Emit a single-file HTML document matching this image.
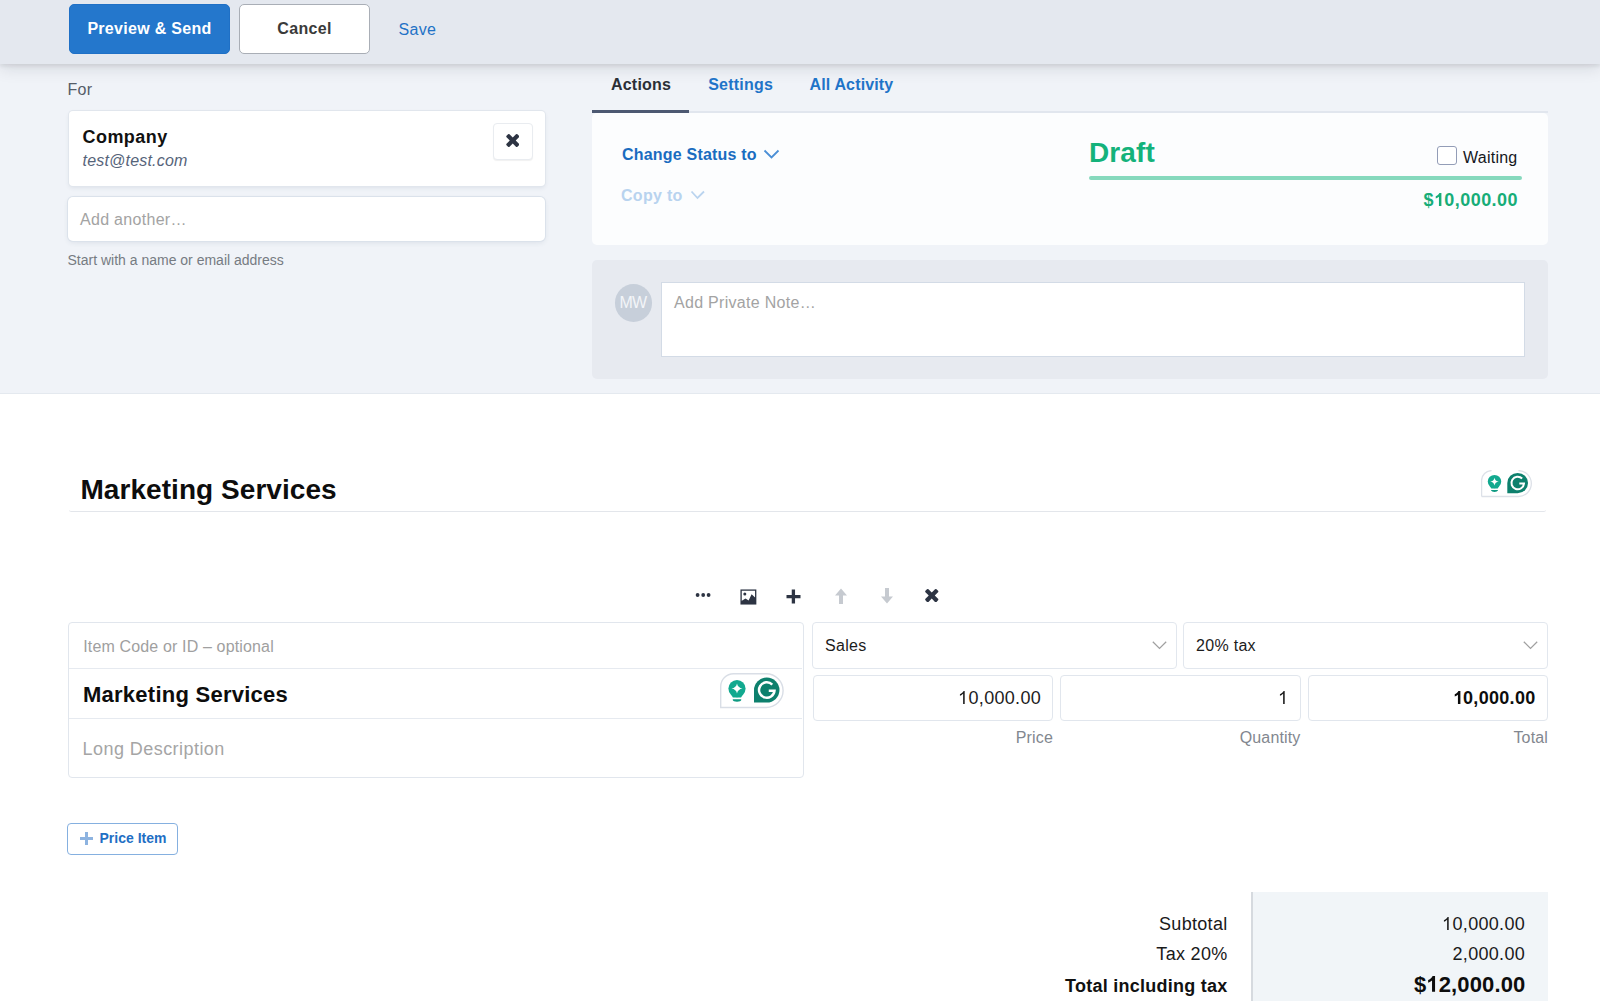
<!DOCTYPE html>
<html><head><meta charset="utf-8">
<style>
*{box-sizing:border-box;margin:0;padding:0}
html,body{width:1600px;height:1001px;overflow:hidden;background:#fff;font-family:"Liberation Sans",sans-serif;}
.a{position:absolute}
.t{position:absolute;white-space:pre;line-height:1;letter-spacing:.3px}
</style></head><body>

<!-- top light section -->
<div class="a" style="left:0;top:0;width:1600px;height:394px;background:#f0f3f8;border-bottom:1px solid #e4e9ef"></div>

<!-- header -->
<div class="a" style="left:0;top:0;width:1600px;height:64px;background:#e4e8ef;box-shadow:0 2px 4px rgba(20,25,35,.09),0 4px 16px rgba(20,25,35,.12)"></div>
<div class="a" style="left:69px;top:4px;width:161px;height:50px;background:#2477cc;border:1px solid #1f70c6;border-radius:5px"></div>
<div class="t" style="left:69px;top:21.3px;width:161px;text-align:center;font-size:16px;font-weight:bold;color:#fff">Preview &amp; Send</div>
<div class="a" style="left:239px;top:4px;width:131px;height:50px;background:#fff;border:1px solid #a9aeb6;border-radius:5px"></div>
<div class="t" style="left:239px;top:21.3px;width:131px;text-align:center;font-size:16px;font-weight:bold;color:#3a3a3a">Cancel</div>
<div class="t" style="left:398.5px;top:21.7px;font-size:16px;color:#1f72c6">Save</div>

<!-- For -->
<div class="t" style="left:67.5px;top:81.5px;font-size:16px;color:#555d68">For</div>
<div class="a" style="left:68.5px;top:111px;width:476.5px;height:75px;background:#fff;border-radius:4px;box-shadow:0 0 0 1px #e1e6ed,0 2px 4px rgba(60,80,110,.10)"></div>
<div class="t" style="left:82.5px;top:127.5px;font-size:18px;font-weight:bold;color:#111;letter-spacing:.45px">Company</div>
<div class="t" style="left:82.5px;top:153px;font-size:16px;font-style:italic;color:#56647a;letter-spacing:.2px">test@test.com</div>
<div class="a" style="left:492.5px;top:123px;width:40.5px;height:36.5px;background:#fff;border:1px solid #e9ecf0;border-radius:4px;box-shadow:0 1px 1px rgba(0,0,0,.06)"></div>
<svg class="a" style="left:505.5px;top:134px" width="13.5" height="13" viewBox="0 0 1188 1188"><path transform="translate(0,1188) scale(1,-1)" d="M1188 956q0 -40 -28 -68l-294 -294l294 -294q28 -28 28 -68t-28 -68l-136 -136q-28 -28 -68 -28t-68 28l-294 294l-294 -294q-28 -28 -68 -28t-68 28l-136 136q-28 28 -28 68t28 68l294 294l-294 294q-28 28 -28 68t28 68l136 136q28 28 68 28t68 -28l294 -294l294 294q28 28 68 28t68 -28l136 -136q28 -28 28 -68z" fill="#2d3443"/></svg>
<div class="a" style="left:68px;top:197px;width:477px;height:44px;background:#fff;border-radius:5px;box-shadow:0 0 0 1px #dbe2eb,0 2px 5px rgba(60,80,110,.10)"></div>
<div class="t" style="left:80px;top:212px;font-size:16px;color:#a3a3a3">Add another…</div>
<div class="t" style="left:67.5px;top:253px;font-size:14px;color:#767b82;letter-spacing:0">Start with a name or email address</div>

<!-- tabs -->
<div class="t" style="left:611px;top:77.4px;font-size:16px;font-weight:bold;color:#2b2f36;letter-spacing:.2px">Actions</div>
<div class="t" style="left:708.2px;top:77.4px;font-size:16px;font-weight:bold;color:#1f74c8;letter-spacing:.22px">Settings</div>
<div class="t" style="left:809.5px;top:77.4px;font-size:16px;font-weight:bold;color:#1f74c8;letter-spacing:.15px">All Activity</div>
<div class="a" style="left:592px;top:110.5px;width:956px;height:2.5px;background:#e1e6ee"></div>
<div class="a" style="left:592px;top:110px;width:97px;height:3px;background:#4d5972;z-index:2"></div>

<!-- actions panel -->
<div class="a" style="left:592px;top:113px;width:956px;height:132px;background:#fcfdfe;border-radius:5px"></div>
<div class="t" style="left:622px;top:146.5px;font-size:16px;font-weight:bold;color:#1a6cc0;letter-spacing:.2px">Change Status to</div>
<svg class="a" style="left:763px;top:149px" width="17" height="11" viewBox="0 0 17 11"><path d="M1.5 1.5 L8.5 8.5 L15.5 1.5" fill="none" stroke="#4b8fd6" stroke-width="1.8"/></svg>
<div class="t" style="left:621px;top:187.5px;font-size:16px;font-weight:bold;color:#b8d3ef">Copy to</div>
<svg class="a" style="left:690px;top:190px" width="16" height="11" viewBox="0 0 16 11"><path d="M1.5 1.5 L7.5 8 L14 1.5" fill="none" stroke="#bad4ef" stroke-width="1.8"/></svg>

<div class="t" style="left:1089px;top:138.5px;font-size:28px;font-weight:bold;color:#14b27b;letter-spacing:.1px">Draft</div>
<div class="a" style="left:1089px;top:175.7px;width:432.5px;height:4.5px;background:#86d9bd;border-radius:3px"></div>
<div class="a" style="left:1437.2px;top:145.6px;width:19.6px;height:19.4px;background:#fff;border:1.5px solid #939db7;border-radius:3px"></div>
<div class="t" style="left:1463px;top:149.8px;font-size:16px;color:#15181d;letter-spacing:.25px">Waiting</div>
<div class="t" style="left:1400px;top:191px;width:118px;text-align:right;font-size:18px;font-weight:bold;color:#17ad78;letter-spacing:.45px">$<svg style="display:inline-block;width:.5562em;height:.71875em;vertical-align:baseline;margin-right:0.45px" viewBox="0 0 1139 1472"><path d="M843 1472 L562 1472 L562 413 Q408 557 199 626 L199 371 Q309 335 438 235 Q567 135 615 6 L843 6 Z" fill="currentColor"/></svg>0,000.00</div>

<!-- note panel -->
<div class="a" style="left:592px;top:260px;width:956px;height:119px;background:#e7eaf0;border-radius:5px"></div>
<div class="a" style="left:614.6px;top:284px;width:37.6px;height:37.6px;border-radius:50%;background:#c7cfda"></div>
<div class="t" style="left:614px;top:295px;width:38px;text-align:center;font-size:16px;color:#f3f5f8;letter-spacing:-.6px">MW</div>
<div class="a" style="left:661px;top:282px;width:864.3px;height:74.5px;background:#fff;border:1px solid #d3dbe6"></div>
<div class="t" style="left:674px;top:295px;font-size:16px;color:#a3a3a3">Add Private Note…</div>

<!-- Heading -->
<div class="t" style="left:80.5px;top:476.4px;font-size:28px;font-weight:bold;color:#0d0d0d;letter-spacing:.05px">Marketing Services</div>
<div class="a" style="left:69px;top:499.3px;width:1477px;height:12.8px;border-bottom:1.8px solid #e3e6eb;border-radius:0 0 2.5px 2.5px"></div>

<!-- grammarly heading -->
<svg class="a" style="left:1481px;top:470px" width="52" height="28" viewBox="0 0 52 28"><path d="M0.6 26.5 L0.6 10.5 A10 10 0 0 1 10.6 0.6 M37.4 0.6 A12.95 12.95 0 0 1 37.4 26.5 L0.6 26.5" fill="none" stroke="#dde1e8" stroke-width="1.3"/><g transform="translate(13.5,11.6)"><circle cx="0" cy="0" r="6.7" fill="#12a98f"/><path d="M-4.6 4.6 L4.6 4.6 L3.2 7 L-3.2 7 Z" fill="#12a98f"/><path d="M0 -3.9 Q0.6 -0.6 4.3 0 Q0.6 0.6 0 3.9 Q-0.6 0.6 -4.3 0 Q-0.6 -0.6 0 -3.9Z" fill="#fff"/><path d="M-3.3 8.3 L3.3 8.3 L3.3 9 Q3 10.3 0 10.3 Q-3 10.3 -3.3 9Z" fill="#0f9a82"/></g><g transform="translate(26.3,2.9)"><path d="M0 20.3 L0 10.15 A10.35 10.15 0 1 1 10.35 20.3 Z" fill="#0d806d"/><path d="M14.85 5.65 A6.3 6.3 0 1 0 16.68 10.65 L12 10.65" fill="none" stroke="#fff" stroke-width="2"/></g></svg>

<!-- toolbar -->
<svg class="a" style="left:694px;top:590px" width="18" height="10" viewBox="0 0 18 10"><circle cx="3.6" cy="5" r="1.9" fill="#2d3443"/><circle cx="9.2" cy="5" r="1.9" fill="#2d3443"/><circle cx="14.6" cy="5" r="1.9" fill="#2d3443"/></svg>
<svg class="a" style="left:740px;top:588.5px" width="17" height="16" viewBox="0 0 17 16"><rect x="1.1" y="1.1" width="14.6" height="13.8" fill="none" stroke="#2d3443" stroke-width="1.3"/><circle cx="4.8" cy="5" r="1.5" fill="#2d3443"/><path d="M1 15 L1 12.3 L5.5 9.6 L8.6 11.5 L11.6 5.3 L15.9 9.3 L15.9 15 Z" fill="#2d3443"/></svg>
<svg class="a" style="left:786px;top:589px" width="15" height="15" viewBox="0 0 15 15"><path d="M7.4 0.6 L7.4 14.6 M0.5 7.6 L14.5 7.6" stroke="#2d3443" stroke-width="3.3"/></svg>
<svg class="a" style="left:832.6px;top:587px" width="16" height="18" viewBox="0 0 16 18"><path d="M8 1.5 L14 8.5 L10 8.5 L10 17 L6 17 L6 8.5 L2 8.5 Z" fill="#c6cad0"/></svg>
<svg class="a" style="left:878.6px;top:587px" width="16" height="18" viewBox="0 0 16 18"><path d="M8 16.5 L14 9.5 L10 9.5 L10 1 L6 1 L6 9.5 L2 9.5 Z" fill="#c6cad0"/></svg>
<svg class="a" style="left:925px;top:589px" width="13.5" height="13.2" viewBox="0 0 1188 1188"><path transform="translate(0,1188) scale(1,-1)" d="M1188 956q0 -40 -28 -68l-294 -294l294 -294q28 -28 28 -68t-28 -68l-136 -136q-28 -28 -68 -28t-68 28l-294 294l-294 -294q-28 -28 -68 -28t-68 28l-136 136q-28 28 -28 68t28 68l294 294l-294 294q-28 28 -28 68t28 68l136 136q28 28 68 28t68 -28l294 -294l294 294q28 28 68 28t68 -28l136 -136q28 -28 28 -68z" fill="#2d3443"/></svg>

<!-- item box -->
<div class="a" style="left:67.5px;top:622.2px;width:736px;height:155.8px;border:1.5px solid #e1e6ed;border-radius:4px;background:#fff"></div>
<div class="a" style="left:69px;top:668.2px;width:733px;height:1.3px;background:#e6eaf0"></div>
<div class="a" style="left:69px;top:717.8px;width:733px;height:1.3px;background:#e6eaf0"></div>
<div class="t" style="left:83.2px;top:638.5px;font-size:16px;color:#a0a0a0;letter-spacing:.15px">Item Code or ID – optional</div>
<div class="t" style="left:83px;top:684.3px;font-size:22px;font-weight:bold;color:#0d0d0d;letter-spacing:.25px">Marketing Services</div>
<div class="t" style="left:82.5px;top:739.5px;font-size:18px;color:#a5a5a5;letter-spacing:.45px">Long Description</div>
<!-- grammarly inline -->
<svg class="a" style="left:720px;top:673px" width="66" height="36" viewBox="0 0 66 36"><path d="M0.7 34.5 L0.7 13.5 A12.8 12.8 0 0 1 13.5 0.7 L46.2 0.7 A16.9 16.9 0 0 1 46.2 34.5 Z" fill="#fff" stroke="#d9dee6" stroke-width="1.4"/><g transform="translate(17,15.6) scale(1.28)"><circle cx="0" cy="0" r="6.7" fill="#12a98f"/><path d="M-4.6 4.6 L4.6 4.6 L3.2 7 L-3.2 7 Z" fill="#12a98f"/><path d="M0 -3.9 Q0.6 -0.6 4.3 0 Q0.6 0.6 0 3.9 Q-0.6 0.6 -4.3 0 Q-0.6 -0.6 0 -3.9Z" fill="#fff"/><path d="M-3.3 8.3 L3.3 8.3 L3.3 9 Q3 10.3 0 10.3 Q-3 10.3 -3.3 9Z" fill="#0f9a82"/></g><g transform="translate(34,4.6) scale(1.23)"><path d="M0 20.3 L0 10.15 A10.35 10.15 0 1 1 10.35 20.3 Z" fill="#0d806d"/><path d="M14.85 5.65 A6.3 6.3 0 1 0 16.68 10.65 L12 10.65" fill="none" stroke="#fff" stroke-width="2"/></g></svg>

<!-- selects -->
<div class="a" style="left:812.3px;top:622px;width:364.7px;height:47px;border:1.9px solid #e2e7ee;border-radius:4px;background:#fff"></div>
<div class="t" style="left:825px;top:638px;font-size:16px;color:#1c1c1c">Sales</div>
<svg class="a" style="left:1151px;top:639px" width="17" height="12" viewBox="0 0 17 12"><path d="M1.8 2.7 L8.5 9.4 L15.2 2.7" fill="none" stroke="#a0a0a0" stroke-width="1.25"/></svg>
<div class="a" style="left:1183.3px;top:622px;width:364.9px;height:47px;border:1.9px solid #e2e7ee;border-radius:4px;background:#fff"></div>
<div class="t" style="left:1196px;top:638px;font-size:16px;color:#1c1c1c">20% tax</div>
<svg class="a" style="left:1521.5px;top:639px" width="17" height="12" viewBox="0 0 17 12"><path d="M1.8 2.7 L8.5 9.4 L15.2 2.7" fill="none" stroke="#a0a0a0" stroke-width="1.25"/></svg>

<!-- inputs -->
<div class="a" style="left:812.5px;top:675px;width:240px;height:45.5px;border:1.5px solid #e1e6ed;border-radius:4px;background:#fff"></div>
<div class="t" style="left:812.5px;top:689px;width:228.5px;text-align:right;font-size:18px;color:#1c1c1c"><svg style="display:inline-block;width:.5562em;height:.71875em;vertical-align:baseline;margin-right:0.3px" viewBox="0 0 1139 1472"><path d="M763 1472 L583 1472 L583 325 Q518 387 412 449 Q305 511 220 542 L220 368 Q371 297 484 196 Q597 95 644 0 L763 0 Z" fill="currentColor"/></svg>0,000.00</div>
<div class="a" style="left:1060px;top:675px;width:240.5px;height:45.5px;border:1.5px solid #e1e6ed;border-radius:4px;background:#fff"></div>
<div class="t" style="left:1060px;top:689px;width:228.7px;text-align:right;font-size:18px;color:#1c1c1c"><svg style="display:inline-block;width:.5562em;height:.71875em;vertical-align:baseline;margin-right:0.3px" viewBox="0 0 1139 1472"><path d="M763 1472 L583 1472 L583 325 Q518 387 412 449 Q305 511 220 542 L220 368 Q371 297 484 196 Q597 95 644 0 L763 0 Z" fill="currentColor"/></svg></div>
<div class="a" style="left:1307.5px;top:675px;width:240px;height:45.5px;border:1.5px solid #e1e6ed;border-radius:4px;background:#fff"></div>
<div class="t" style="left:1307.5px;top:689px;width:228px;text-align:right;font-size:18px;font-weight:bold;color:#0d0d0d"><svg style="display:inline-block;width:.5562em;height:.71875em;vertical-align:baseline;margin-right:0.3px" viewBox="0 0 1139 1472"><path d="M843 1472 L562 1472 L562 413 Q408 557 199 626 L199 371 Q309 335 438 235 Q567 135 615 6 L843 6 Z" fill="currentColor"/></svg>0,000.00</div>
<div class="t" style="left:900px;top:729.7px;width:153px;text-align:right;font-size:16px;color:#82878f;letter-spacing:.15px">Price</div>
<div class="t" style="left:1150px;top:729.7px;width:150.5px;text-align:right;font-size:16px;color:#82878f;letter-spacing:.15px">Quantity</div>
<div class="t" style="left:1400px;top:729.7px;width:148px;text-align:right;font-size:16px;color:#82878f;letter-spacing:.15px">Total</div>

<!-- price item button -->
<div class="a" style="left:67px;top:823px;width:111px;height:32px;border:1.2px solid #85b0e0;border-radius:4px;background:#fff"></div>
<svg class="a" style="left:80px;top:832px" width="13" height="13" viewBox="0 0 13 13"><path d="M6.5 0 L6.5 13 M0 6.5 L13 6.5" stroke="#8db3e0" stroke-width="3"/></svg>
<div class="t" style="left:99.5px;top:831px;font-size:14px;font-weight:bold;color:#1f6fc4;letter-spacing:0px">Price Item</div>

<!-- totals -->
<div class="a" style="left:1251px;top:892px;width:297px;height:120px;background:#f1f5f8;border-left:2px solid #d6dadf"></div>
<div class="t" style="left:1000px;top:915px;width:1227.5px;text-align:right;font-size:18px;color:#1a1a1a;left:0">Subtotal</div>
<div class="t" style="left:0;top:944.5px;width:1227.5px;text-align:right;font-size:18px;color:#1a1a1a">Tax 20%</div>
<div class="t" style="left:0;top:977px;width:1227.5px;text-align:right;font-size:18px;font-weight:bold;color:#111;letter-spacing:.25px">Total including tax</div>
<div class="t" style="left:0;top:915px;width:1525px;text-align:right;font-size:18px;color:#1a1a1a"><svg style="display:inline-block;width:.5562em;height:.71875em;vertical-align:baseline;margin-right:0.3px" viewBox="0 0 1139 1472"><path d="M763 1472 L583 1472 L583 325 Q518 387 412 449 Q305 511 220 542 L220 368 Q371 297 484 196 Q597 95 644 0 L763 0 Z" fill="currentColor"/></svg>0,000.00</div>
<div class="t" style="left:0;top:944.5px;width:1525px;text-align:right;font-size:18px;color:#1a1a1a">2,000.00</div>
<div class="t" style="left:0;top:973.5px;width:1525.5px;text-align:right;font-size:22px;font-weight:bold;color:#0d0d0d;letter-spacing:.15px">$<svg style="display:inline-block;width:.5562em;height:.71875em;vertical-align:baseline;margin-right:0.15px" viewBox="0 0 1139 1472"><path d="M843 1472 L562 1472 L562 413 Q408 557 199 626 L199 371 Q309 335 438 235 Q567 135 615 6 L843 6 Z" fill="currentColor"/></svg>2,000.00</div>

</body></html>
